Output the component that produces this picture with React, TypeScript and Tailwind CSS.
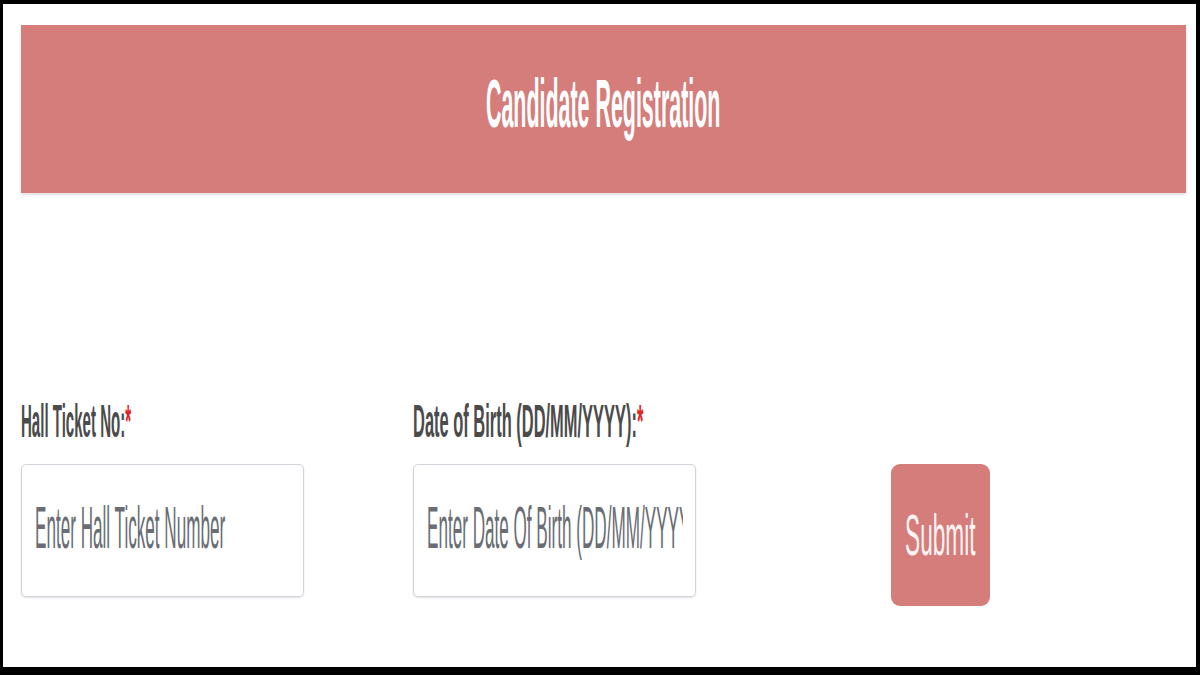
import React from "react";

const font = { fontFamily: '"Liberation Sans", Arial, sans-serif' };

export default function App() {
  return (
    <div
      className="w-[1200px] h-[675px] bg-black pt-[4px] pl-[3px] pr-[4px] pb-[8px]"
      style={font}
    >
      <div className="h-full bg-white pt-[21px] pl-[18px] pr-[10px]">
        {/* header banner */}
        <div className="h-[168px] bg-[#d57d7b] text-center pt-[44px] shadow-[0_2px_3px_rgba(0,0,0,0.12)]">
          <span className="inline-block whitespace-nowrap text-[68px] leading-[68px] font-bold text-white scale-x-[0.315]">
            Candidate Registration
          </span>
        </div>

        {/* form row */}
        <div className="flex items-start mt-[202px]">
          <div className="w-[283px]">
            <label className="block h-[52px] whitespace-nowrap origin-left scale-x-[0.32] text-[47px] leading-[52px] font-bold text-[#4b4b4b]">
              Hall Ticket No:<span className="text-[#e0241f]">*</span>
            </label>
            <div className="mt-[17px] h-[133px] rounded-[5px] border border-[#d2d2da] shadow-[0_1px_2px_rgba(0,0,0,0.12)] pt-[31px] pl-[13px] pr-[12px] overflow-hidden">
              <span className="inline-block whitespace-nowrap origin-left scale-x-[0.29] text-[59px] leading-[64px] text-[#6a6d73]">
                Enter Hall Ticket Number
              </span>
            </div>
          </div>

          <div className="ml-[109px] w-[283px]">
            <label className="block h-[52px] whitespace-nowrap origin-left scale-x-[0.35] text-[47px] leading-[52px] font-bold text-[#4b4b4b]">
              Date of Birth (DD/MM/YYYY):<span className="text-[#e0241f]">*</span>
            </label>
            <div className="mt-[17px] h-[133px] rounded-[5px] border border-[#d2d2da] shadow-[0_1px_2px_rgba(0,0,0,0.12)] pt-[31px] pl-[13px] pr-[12px]">
              <div className="overflow-hidden">
                <span className="inline-block whitespace-nowrap origin-left scale-x-[0.29] text-[59px] leading-[64px] text-[#6a6d73]">
                  Enter Date Of Birth (DD/MM/YYYY)
                </span>
              </div>
            </div>
          </div>

          <button className="ml-[195px] mt-[69px] w-[99px] h-[142px] rounded-[9px] bg-[#d57d7b] flex items-center justify-center">
            <span className="inline-block whitespace-nowrap scale-x-[0.39] text-[58px] leading-[58px] text-[#fff4f4]">
              Submit
            </span>
          </button>
        </div>
      </div>
    </div>
  );
}
